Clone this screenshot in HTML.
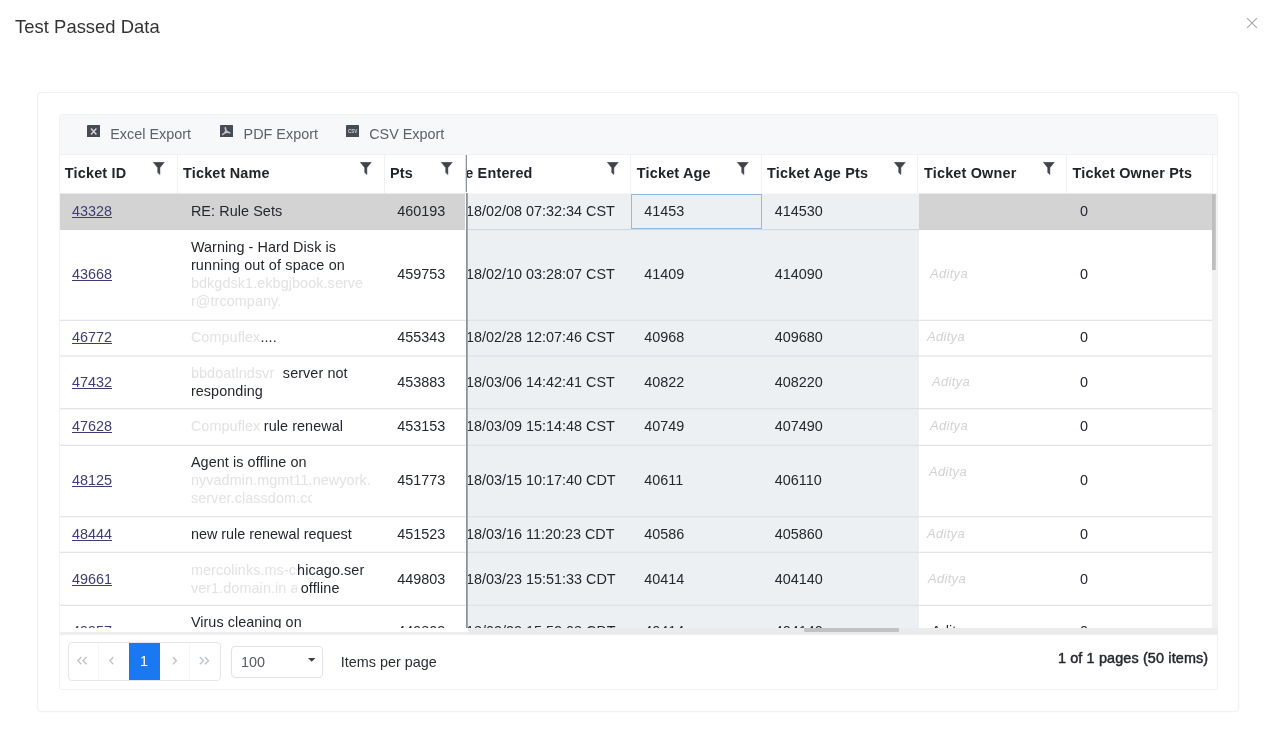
<!DOCTYPE html>
<html>
<head>
<meta charset="utf-8">
<title>Test Passed Data</title>
<style>
*{box-sizing:border-box;margin:0;padding:0}
html,body{width:1277px;height:735px;overflow:hidden;background:#fff}
body{will-change:transform;font-family:"Liberation Sans",sans-serif;font-size:14.4px;color:#24282c;position:relative}
div,svg,span,a{position:absolute}
.t{white-space:nowrap;line-height:18px;height:18px}
.b{font-weight:bold;color:#212529;letter-spacing:.2px}
a{color:#3f3c78;text-decoration:underline;white-space:nowrap;line-height:18px}
.r{color:#e2e2e2;filter:blur(.6px)}
.nm{letter-spacing:.08px}
span.i{position:static}
.ln{height:1px;background:#dfe2e6}
.vd{width:1px;background:#f0f1f3;top:154px;height:39px}
.tb{color:#5c6166}
</style>
</head>
<body>
<div class="t" style="left:15.1px;top:16.4px;font-size:18.4px;letter-spacing:.03px;line-height:21px;height:21px;color:#333">Test Passed Data</div>
<svg style="left:1246px;top:17px" width="12" height="12" viewBox="0 0 12 12"><path d="M1.1 1.1L10.9 10.9M10.9 1.1L1.1 10.9" stroke="#a6a6ac" stroke-width="1.05" fill="none"/></svg>
<div style="left:37px;top:92px;width:1202px;height:620px;border:1px solid #eff1f4;border-radius:5px;background:#fff;box-shadow:0 0 1.5px #eef0f4"></div>
<div style="left:59px;top:114px;width:1158.5px;height:575.5px;border:1px solid #f1f2f5;border-radius:3px;background:#fff"></div>
<div style="left:60px;top:115px;width:1156.5px;height:40px;background:#f7f8fa;border-radius:2px 2px 0 0"></div>
<div style="left:60px;top:154px;width:1156.5px;height:1px;background:#eef0f3"></div>
<svg style="left:86.8px;top:124.6px" width="13.2" height="12.6" viewBox="0 0 13.2 12.6"><rect x="0" y="0" width="13.2" height="12.6" rx="1" fill="#464c54"/><path d="M4 3.4L9.4 9.4M9.4 3.4L4 9.4" stroke="#d0d3d6" stroke-width="1.5" fill="none"/></svg>
<svg style="left:220px;top:124.6px" width="13.2" height="12.6" viewBox="0 0 13.2 12.6"><rect x="0" y="0" width="13.2" height="12.6" rx="1" fill="#464c54"/><path d="M5.3 2.6C4.6 4.2 6.4 6.6 9.9 7.9M5.6 3C6.4 5.2 5 8 2.6 9.6M2.8 9.3C4.8 7.6 7.6 7 10 7.8" stroke="#c6c9cd" stroke-width="1.3" fill="none" stroke-linecap="round"/></svg>
<svg style="left:345.9px;top:124.6px" width="13.2" height="12.6" viewBox="0 0 13.2 12.6"><rect x="0" y="0" width="13.2" height="12.6" rx="1" fill="#464c54"/><text x="6.6" y="8.2" font-family="Liberation Sans" font-weight="bold" font-size="4.6" fill="#d0d3d6" text-anchor="middle">CSV</text></svg>
<div class="t tb" style="left:110.2px;top:124.5px;">Excel Export</div>
<div class="t tb" style="left:243.6px;top:124.5px;">PDF Export</div>
<div class="t tb" style="left:369.2px;top:124.5px;">CSV Export</div>
<div style="left:60px;top:155px;width:1156.5px;height:38px;background:#fff"></div>
<div class="t b" style="left:64.8px;top:163.8px;">Ticket ID</div>
<svg style="left:153.4px;top:161.9px" width="13" height="14.5" viewBox="0 0 13 14.5"><path d="M0.3 0.3H11.3L6.9 5.7V12.6L4.7 10.5V5.7Z" fill="#3e444b" stroke="#3e444b" stroke-width=".5" stroke-linejoin="round"/></svg>
<div class="t b" style="left:183px;top:163.8px;">Ticket Name</div>
<svg style="left:360px;top:161.9px" width="13" height="14.5" viewBox="0 0 13 14.5"><path d="M0.3 0.3H11.3L6.9 5.7V12.6L4.7 10.5V5.7Z" fill="#3e444b" stroke="#3e444b" stroke-width=".5" stroke-linejoin="round"/></svg>
<div class="t b" style="left:389.9px;top:163.8px;">Pts</div>
<svg style="left:441px;top:161.9px" width="13" height="14.5" viewBox="0 0 13 14.5"><path d="M0.3 0.3H11.3L6.9 5.7V12.6L4.7 10.5V5.7Z" fill="#3e444b" stroke="#3e444b" stroke-width=".5" stroke-linejoin="round"/></svg>
<div class="vd" style="left:176.9px"></div>
<div class="vd" style="left:383.9px"></div>
<div style="left:467px;top:155px;width:745.5px;height:38px;overflow:hidden">
<div class="t b" style="left:-25.600000000000023px;top:8.800000000000011px">Date Entered</div>
<div class="t b" style="left:169.79999999999995px;top:8.800000000000011px">Ticket Age</div>
<div class="t b" style="left:300.1px;top:8.800000000000011px">Ticket Age Pts</div>
<div class="t b" style="left:457px;top:8.800000000000011px">Ticket Owner</div>
<div class="t b" style="left:605.5px;top:8.800000000000011px">Ticket Owner Pts</div>
</div>
<svg style="left:606.9px;top:161.9px" width="13" height="14.5" viewBox="0 0 13 14.5"><path d="M0.3 0.3H11.3L6.9 5.7V12.6L4.7 10.5V5.7Z" fill="#3e444b" stroke="#3e444b" stroke-width=".5" stroke-linejoin="round"/></svg>
<svg style="left:737px;top:161.9px" width="13" height="14.5" viewBox="0 0 13 14.5"><path d="M0.3 0.3H11.3L6.9 5.7V12.6L4.7 10.5V5.7Z" fill="#3e444b" stroke="#3e444b" stroke-width=".5" stroke-linejoin="round"/></svg>
<svg style="left:893.9px;top:161.9px" width="13" height="14.5" viewBox="0 0 13 14.5"><path d="M0.3 0.3H11.3L6.9 5.7V12.6L4.7 10.5V5.7Z" fill="#3e444b" stroke="#3e444b" stroke-width=".5" stroke-linejoin="round"/></svg>
<svg style="left:1042.7px;top:161.9px" width="13" height="14.5" viewBox="0 0 13 14.5"><path d="M0.3 0.3H11.3L6.9 5.7V12.6L4.7 10.5V5.7Z" fill="#3e444b" stroke="#3e444b" stroke-width=".5" stroke-linejoin="round"/></svg>
<div class="vd" style="left:630.3px"></div>
<div class="vd" style="left:760.9px"></div>
<div class="vd" style="left:917.1px"></div>
<div class="vd" style="left:1066.2px"></div>
<div class="vd" style="left:1212.4px"></div>
<div style="left:60px;top:193px;width:1152.5px;height:435px;overflow:hidden">
<div style="left:407.5px;top:1px;width:451px;height:500px;background:#ecf0f2"></div>
<div style="left:0px;top:1px;width:405px;height:36px;background:#d3d3d3"></div>
<div style="left:858.5px;top:1px;width:294px;height:36px;background:#d3d3d3"></div>
<div style="left:0px;top:0px;width:405px;height:1px;background:#e9e9e9"></div>
<div style="left:858.5px;top:0px;width:294px;height:1px;background:#e9e9e9"></div>
<div style="left:407.5px;top:0px;width:451px;height:1px;background:#f5f7f8"></div>
<div style="left:407.5px;top:36px;width:451px;height:1px;background:rgba(205,212,218,0.90)"></div>
<div style="left:407.5px;top:37px;width:451px;height:1px;background:rgba(205,212,218,0.10)"></div>
<div style="left:0px;top:126px;width:1152.5px;height:1px;background:rgba(218,222,227,0.20)"></div>
<div style="left:0px;top:127px;width:1152.5px;height:1px;background:rgba(218,222,227,0.80)"></div>
<div style="left:0px;top:162px;width:1152.5px;height:1px;background:rgba(218,222,227,0.50)"></div>
<div style="left:0px;top:163px;width:1152.5px;height:1px;background:rgba(218,222,227,0.50)"></div>
<div style="left:0px;top:215px;width:1152.5px;height:1px;background:rgba(218,222,227,0.80)"></div>
<div style="left:0px;top:216px;width:1152.5px;height:1px;background:rgba(218,222,227,0.20)"></div>
<div style="left:0px;top:251px;width:1152.5px;height:1px;background:rgba(218,222,227,0.20)"></div>
<div style="left:0px;top:252px;width:1152.5px;height:1px;background:rgba(218,222,227,0.80)"></div>
<div style="left:0px;top:323px;width:1152.5px;height:1px;background:rgba(218,222,227,0.70)"></div>
<div style="left:0px;top:324px;width:1152.5px;height:1px;background:rgba(218,222,227,0.30)"></div>
<div style="left:0px;top:358px;width:1152.5px;height:1px;background:rgba(218,222,227,0.20)"></div>
<div style="left:0px;top:359px;width:1152.5px;height:1px;background:rgba(218,222,227,0.80)"></div>
<div style="left:0px;top:411px;width:1152.5px;height:1px;background:rgba(218,222,227,0.20)"></div>
<div style="left:0px;top:412px;width:1152.5px;height:1px;background:rgba(218,222,227,0.80)"></div>
<a style="left:12px;top:9px">43328</a>
<div class="t nm" style="left:130.9px;top:9.0px;">RE: Rule Sets</div>
<div class="t" style="left:337.3px;top:9px;">460193</div>
<div class="t" style="left:584.3px;top:9px;">41453</div>
<div class="t" style="left:714.7px;top:9px;">414530</div>
<div class="t" style="left:1020px;top:9px;">0</div>
<a style="left:12px;top:72px">43668</a>
<div class="t nm" style="left:130.9px;top:44.69999999999999px;">Warning - Hard Disk is</div>
<div class="t nm" style="left:130.9px;top:62.89999999999998px;letter-spacing:0.16px">running out of space on</div>
<div class="t nm" style="left:130.9px;top:81.09999999999997px;"><span class="i r" style="display:inline-block;width:180px;overflow:hidden;vertical-align:top;white-space:nowrap">bdkgdsk1.ekbgjbook.serve</span></div>
<div class="t nm" style="left:130.9px;top:99.29999999999995px;"><span class="i r" style="display:inline-block;width:89px;overflow:hidden;vertical-align:top;white-space:nowrap">r@trcompany.in</span></div>
<div class="t" style="left:337.3px;top:72px;">459753</div>
<div class="t" style="left:584.3px;top:72px;">41409</div>
<div class="t" style="left:714.7px;top:72px;">414090</div>
<div class="t" style="left:1020px;top:72px;">0</div>
<div class="t r" style="left:870px;top:72px;font-size:13px;font-style:italic;letter-spacing:.3px;color:#d2d2d2">Aditya</div>
<a style="left:12px;top:135px">46772</a>
<div class="t nm" style="left:130.9px;top:135.0px;"><span class="i r" style="display:inline-block;width:69.5px;overflow:hidden;vertical-align:top;white-space:nowrap">Compuflex</span>....</div>
<div class="t" style="left:337.3px;top:135px;">455343</div>
<div class="t" style="left:584.3px;top:135px;">40968</div>
<div class="t" style="left:714.7px;top:135px;">409680</div>
<div class="t" style="left:1020px;top:135px;">0</div>
<div class="t r" style="left:867px;top:135px;font-size:13px;font-style:italic;letter-spacing:.3px;color:#d2d2d2">Aditya</div>
<a style="left:12px;top:180px">47432</a>
<div class="t nm" style="left:130.9px;top:170.89999999999998px;"><span class="i r" style="display:inline-block;width:87.9px;overflow:hidden;vertical-align:top;white-space:nowrap">bbdoatlndsvr m</span> server not</div>
<div class="t nm" style="left:130.9px;top:189.09999999999997px;">responding</div>
<div class="t" style="left:337.3px;top:180px;">453883</div>
<div class="t" style="left:584.3px;top:180px;">40822</div>
<div class="t" style="left:714.7px;top:180px;">408220</div>
<div class="t" style="left:1020px;top:180px;">0</div>
<div class="t r" style="left:872px;top:180px;font-size:13px;font-style:italic;letter-spacing:.3px;color:#d2d2d2">Aditya</div>
<a style="left:12px;top:224px">47628</a>
<div class="t nm" style="left:130.9px;top:224.0px;"><span class="i r" style="display:inline-block;width:68.8px;overflow:hidden;vertical-align:top;white-space:nowrap">Compuflex</span> rule renewal</div>
<div class="t" style="left:337.3px;top:224px;">453153</div>
<div class="t" style="left:584.3px;top:224px;">40749</div>
<div class="t" style="left:714.7px;top:224px;">407490</div>
<div class="t" style="left:1020px;top:224px;">0</div>
<div class="t r" style="left:870px;top:224px;font-size:13px;font-style:italic;letter-spacing:.3px;color:#d2d2d2">Aditya</div>
<a style="left:12px;top:278px">48125</a>
<div class="t nm" style="left:130.9px;top:259.8px;">Agent is offline on</div>
<div class="t nm" style="left:130.9px;top:278.0px;"><span class="i r" style="display:inline-block;width:179px;overflow:hidden;vertical-align:top;white-space:nowrap">nyvadmin.mgmt11.newyork.</span></div>
<div class="t nm" style="left:130.9px;top:296.2px;"><span class="i r" style="display:inline-block;width:121px;overflow:hidden;vertical-align:top;white-space:nowrap">server.classdom.com</span></div>
<div class="t" style="left:337.3px;top:278px;">451773</div>
<div class="t" style="left:584.3px;top:278px;">40611</div>
<div class="t" style="left:714.7px;top:278px;">406110</div>
<div class="t" style="left:1020px;top:278px;">0</div>
<div class="t r" style="left:869px;top:270px;font-size:13px;font-style:italic;letter-spacing:.3px;color:#d2d2d2">Aditya</div>
<a style="left:12px;top:332px">48444</a>
<div class="t nm" style="left:130.9px;top:332.0px;letter-spacing:0px">new rule renewal request</div>
<div class="t" style="left:337.3px;top:332px;">451523</div>
<div class="t" style="left:584.3px;top:332px;">40586</div>
<div class="t" style="left:714.7px;top:332px;">405860</div>
<div class="t" style="left:1020px;top:332px;">0</div>
<div class="t r" style="left:867px;top:332px;font-size:13px;font-style:italic;letter-spacing:.3px;color:#d2d2d2">Aditya</div>
<a style="left:12px;top:377px">49661</a>
<div class="t nm" style="left:130.9px;top:367.9px;"><span class="i r" style="display:inline-block;width:106.2px;overflow:hidden;vertical-align:top;white-space:nowrap">mercolinks.ms-c1</span>hicago.ser</div>
<div class="t nm" style="left:130.9px;top:386.1px;"><span class="i r" style="display:inline-block;width:105.8px;overflow:hidden;vertical-align:top;white-space:nowrap">ver1.domain.in a</span> offline</div>
<div class="t" style="left:337.3px;top:377px;">449803</div>
<div class="t" style="left:584.3px;top:377px;">40414</div>
<div class="t" style="left:714.7px;top:377px;">404140</div>
<div class="t" style="left:1020px;top:377px;">0</div>
<div class="t r" style="left:868px;top:377px;font-size:13px;font-style:italic;letter-spacing:.3px;color:#d2d2d2">Aditya</div>
<a style="left:12px;top:429px">49957</a>
<div class="t nm" style="left:130.9px;top:419.9px;letter-spacing:0.04px">Virus cleaning on</div>
<div class="t nm" style="left:130.9px;top:438.1px;"><span class="i r">server</span></div>
<div class="t" style="left:337.3px;top:429px;">449803</div>
<div class="t" style="left:584.3px;top:429px;">40414</div>
<div class="t" style="left:714.7px;top:429px;">404140</div>
<div class="t" style="left:1020px;top:429px;">0</div>
<div class="t" style="left:871.5px;top:429px;">Aditya</div>
</div>
<div style="left:468px;top:193px;width:162px;height:435px;overflow:hidden">
<div class="t" style="left:-2.0px;top:9px">18/02/08 07:32:34 CST</div>
<div class="t" style="left:-2.0px;top:72px">18/02/10 03:28:07 CST</div>
<div class="t" style="left:-2.0px;top:135px">18/02/28 12:07:46 CST</div>
<div class="t" style="left:-2.0px;top:180px">18/03/06 14:42:41 CST</div>
<div class="t" style="left:-2.0px;top:224px">18/03/09 15:14:48 CST</div>
<div class="t" style="left:-2.0px;top:278px">18/03/15 10:17:40 CDT</div>
<div class="t" style="left:-2.0px;top:332px">18/03/16 11:20:23 CDT</div>
<div class="t" style="left:-2.0px;top:377px">18/03/23 15:51:33 CDT</div>
<div class="t" style="left:-2.0px;top:429px">18/03/23 15:52:08 CDT</div>
</div>
<div style="left:631.2px;top:193.6px;width:131px;height:35.2px;border:1px solid #8dbbe3"></div>
<div style="left:465px;top:155px;width:1px;height:37px;background:#dcdee1"></div>
<div style="left:466px;top:155px;width:1px;height:37px;background:#8e939a"></div>
<div style="left:466px;top:193px;width:1px;height:435px;background:#8e939a"></div>
<div style="left:467px;top:193px;width:1px;height:435px;background:#a2a7ad"></div>
<div style="left:1212.3px;top:193px;width:5.4px;height:435px;background:#f1f1f1"></div>
<div style="left:1212.2px;top:194px;width:3.8px;height:76.4px;background:linear-gradient(90deg,#bebebe 75%,#d4d4d4)"></div>
<div style="left:60px;top:632px;width:1157.6px;height:2.6px;background:#eeeeee"></div>
<div style="left:467.6px;top:628px;width:750px;height:6px;background:#ebebeb"></div>
<div style="left:804.4px;top:628.2px;width:94.8px;height:4px;background:#c2c2c2;border-radius:1px"></div>
<div style="left:67.5px;top:642px;width:153.4px;height:38.6px;border:1px solid #e4e7ea;border-radius:4px;background:#fff"></div>
<div style="left:97.5px;top:643px;width:1px;height:36.6px;background:#f4f5f6"></div>
<div style="left:159.2px;top:643px;width:1px;height:36.6px;background:#f4f5f6"></div>
<div style="left:189.4px;top:643px;width:1px;height:36.6px;background:#f4f5f6"></div>
<div style="left:128.6px;top:643px;width:31.2px;height:37px;background:#1a79f2"></div>
<div class="t" style="left:140px;top:651.6px;color:#fff">1</div>
<svg style="left:76.6px;top:655.6px" width="12" height="9.4" viewBox="0 0 12 9.4" fill="none" stroke="#c1c5c9" stroke-width="1.45"><path d="M4.3 1.1L0.9 4.7L4.3 8.3"/><path d="M9.5 1.1L6.1000000000000005 4.7L9.5 8.3"/></svg>
<svg style="left:108.8px;top:655.6px" width="12" height="9.4" viewBox="0 0 12 9.4" fill="none" stroke="#c1c5c9" stroke-width="1.45"><path d="M4.3 1.1L0.9 4.7L4.3 8.3"/></svg>
<svg style="left:171.6px;top:655.6px" width="12" height="9.4" viewBox="0 0 12 9.4" fill="none" stroke="#c1c5c9" stroke-width="1.45"><path d="M0.9 1.1L4.3 4.7L0.9 8.3"/></svg>
<svg style="left:199px;top:655.6px" width="12" height="9.4" viewBox="0 0 12 9.4" fill="none" stroke="#c1c5c9" stroke-width="1.45"><path d="M0.9 1.1L4.3 4.7L0.9 8.3"/><path d="M6.1000000000000005 1.1L9.5 4.7L6.1000000000000005 8.3"/></svg>
<div style="left:230.7px;top:645.6px;width:92.6px;height:32.6px;border:1px solid #dfe2e6;border-radius:4px;background:#fff"></div>
<div class="t" style="left:241px;top:653.2px;color:#555b61">100</div>
<svg style="left:307.6px;top:658.3px" width="7.4" height="3.8" viewBox="0 0 7.4 3.8"><path d="M0 0H7.4L3.7 3.8Z" fill="#3a3f45"/></svg>
<div class="t" style="left:340.8px;top:653.2px;color:#2b2f33">Items per page</div>
<div class="t" style="right:68.70000000000005px;top:648.5px;color:#24282c;letter-spacing:.14px;-webkit-text-stroke:.45px #24282c">1 of 1 pages (50 items)</div>
</body>
</html>
